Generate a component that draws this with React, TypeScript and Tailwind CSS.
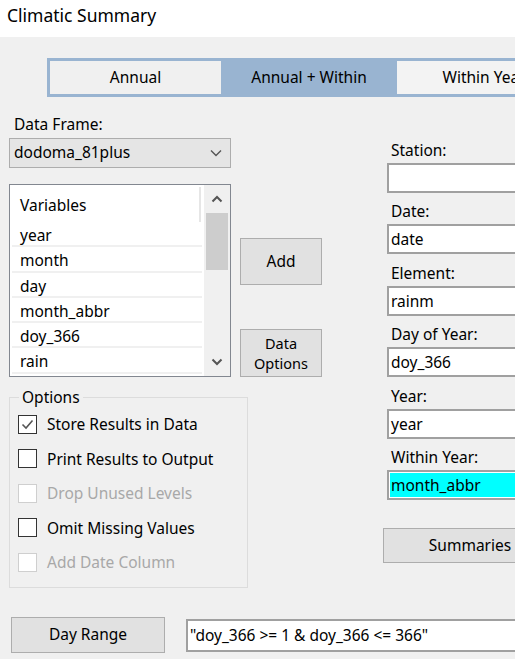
import React from "react";

const font = { fontFamily: '"Segoe UI", "Noto Sans", "Open Sans", sans-serif' };

function Check({ checked, disabled, label }: { checked?: boolean; disabled?: boolean; label: string }) {
  return (
    <div className="flex items-center h-[34.5px] pl-[8px]">
      <div
        className={
          "w-[19px] h-[19px] border bg-white flex items-center justify-center " +
          (disabled ? "border-[#cfcfcf]" : "border-[#333333]")
        }
      >
        {checked && (
          <svg width="15" height="15" viewBox="0 0 15 15">
            <polyline points="2.5,7.5 6,11 12.5,3.5" fill="none" stroke="#555555" strokeWidth="1.6" />
          </svg>
        )}
      </div>
      <span className={"ml-[10px] text-[15.5px] leading-[20px] " + (disabled ? "text-[#a8a8a8]" : "text-black")}>
        {label}
      </span>
    </div>
  );
}

function Field({ label, value, cyan }: { label: string; value: string; cyan?: boolean }) {
  return (
    <div className="mb-[8.4px]">
      <div className="h-[20px] leading-[20px] pl-[4px] text-[15.5px] text-black">{label}</div>
      <div className="mt-[3px] h-[30px] w-[200px] border-2 border-[#a0a0a0] bg-white p-[1px]">
        <div className={"h-full leading-[24px] pl-[1px] text-[15.5px] text-black " + (cyan ? "bg-[#00ffff]" : "")}>
          {value}
        </div>
      </div>
    </div>
  );
}

export default function App() {
  const items = ["year", "month", "day", "month_abbr", "doy_366", "rain"];
  return (
    <div className="w-[515px] h-[659px] overflow-hidden bg-[#f0f0f0]" style={font}>
      <div className="h-[37px] bg-white pl-[7px] pt-[3px] text-[17.5px] leading-[24px] text-black">Climatic Summary</div>

      <div className="mt-[21px] ml-[47px] h-[39px] w-[560px] bg-[#99b4d1] p-[3px] flex">
        <div className="w-[171px] shrink-0 h-full bg-[#f0f0f0] flex items-center justify-center text-[15.5px] text-black">Annual</div>
        <div className="w-[176px] shrink-0 h-full flex items-center justify-center text-[15.5px] text-black">Annual + Within</div>
        <div className="w-[174px] shrink-0 h-full bg-[#f3f3f3] flex items-center justify-center text-[15.5px] text-black">Within Year</div>
      </div>

      <div className="flex mt-[17px]">
        <div className="w-[387px] shrink-0 pl-[9px]">
          <div className="flex">
            <div className="w-[222px] shrink-0">
              <div className="h-[20px] leading-[20px] pl-[5px] text-[15.5px] text-black">Data Frame:</div>
              <div className="mt-[4px] h-[30px] border border-[#adadad] bg-[#e5e5e5] flex items-center justify-between pl-[4px] pr-[8px]">
                <span className="text-[15.5px] text-black">dodoma_81plus</span>
                <svg width="12" height="8" viewBox="0 0 12 8">
                  <polyline points="1,1.5 6,6.5 11,1.5" fill="none" stroke="#555" strokeWidth="1.4" />
                </svg>
              </div>
              <div className="mt-[16px] h-[193px] border border-[#828790] bg-white flex">
                <div className="flex-1 flex flex-col">
                  <div className="h-[37px] shrink-0 flex">
                    <div className="mt-[2px] w-[191px] h-[35px] border-r-2 border-[#e6e6e6] pl-[10px] pt-[8px] text-[15.5px] leading-[20px] text-black">
                      Variables
                    </div>
                  </div>
                  {items.map((it) => (
                    <div
                      key={it}
                      className="mx-[2px] h-[25.25px] shrink-0 border-b-2 border-[#f0f0f0] pl-[8px] pt-[1px] text-[15.5px] leading-[24px] text-black"
                    >
                      {it}
                    </div>
                  ))}
                </div>
                <div className="w-[26px] shrink-0 bg-[#f0f0f0] flex flex-col items-center">
                  <div className="h-[28px] flex items-center justify-center">
                    <svg width="12" height="8" viewBox="0 0 12 8">
                      <polyline points="1.5,6.5 6,2 10.5,6.5" fill="none" stroke="#555" strokeWidth="2" />
                    </svg>
                  </div>
                  <div className="w-[22px] h-[57px] bg-[#cdcdcd]" />
                  <div className="flex-1" />
                  <div className="h-[28px] flex items-center justify-center">
                    <svg width="12" height="8" viewBox="0 0 12 8">
                      <polyline points="1.5,1.5 6,6 10.5,1.5" fill="none" stroke="#555" strokeWidth="2" />
                    </svg>
                  </div>
                </div>
              </div>
            </div>
            <div className="ml-[9px] w-[82px] shrink-0 flex flex-col">
              <div className="mt-[124px] h-[47px] border border-[#adadad] bg-[#e1e1e1] flex items-center justify-center text-[15.5px] text-black">
                Add
              </div>
              <div className="mt-[44px] h-[48px] border border-[#adadad] bg-[#e1e1e1] flex items-center justify-center text-center text-[14.5px] leading-[20px] text-black">
                Data
                <br />
                Options
              </div>
            </div>
          </div>

          <fieldset className="mt-[10px] w-[239px] border border-[#dcdcdc] pb-[7px]">
            <legend className="ml-[9px] px-[3px] text-[15.5px] leading-[20px] text-black">Options</legend>
            <Check checked label="Store Results in Data" />
            <Check label="Print Results to Output" />
            <Check disabled label="Drop Unused Levels" />
            <Check label="Omit Missing Values" />
            <Check disabled label="Add Date Column" />
          </fieldset>
        </div>

        <div className="mt-[26px] flex-1">
          <Field label="Station:" value="" />
          <Field label="Date:" value="date" />
          <Field label="Element:" value="rainm" />
          <Field label="Day of Year:" value="doy_366" />
          <Field label="Year:" value="year" />
          <Field label="Within Year:" value="month_abbr" cyan />
          <div className="mt-[28px] -ml-[4px] w-[174px] h-[35px] border border-[#adadad] bg-[#e1e1e1] flex items-center justify-center text-[15.5px] text-black">
            Summaries
          </div>
        </div>
      </div>

      <div className="flex mt-[29px] ml-[11px]">
        <div className="w-[154px] shrink-0 h-[36px] border border-[#adadad] bg-[#e1e1e1] flex items-center justify-center text-[15.5px] text-black">
          Day Range
        </div>
        <div className="ml-[21px] mt-[2px] shrink-0 h-[33px] w-[400px] border-2 border-[#a0a0a0] bg-white pl-[2px] text-[15.5px] leading-[29px] text-black">
          "doy_366 &gt;= 1 &amp; doy_366 &lt;= 366"
        </div>
      </div>
    </div>
  );
}
